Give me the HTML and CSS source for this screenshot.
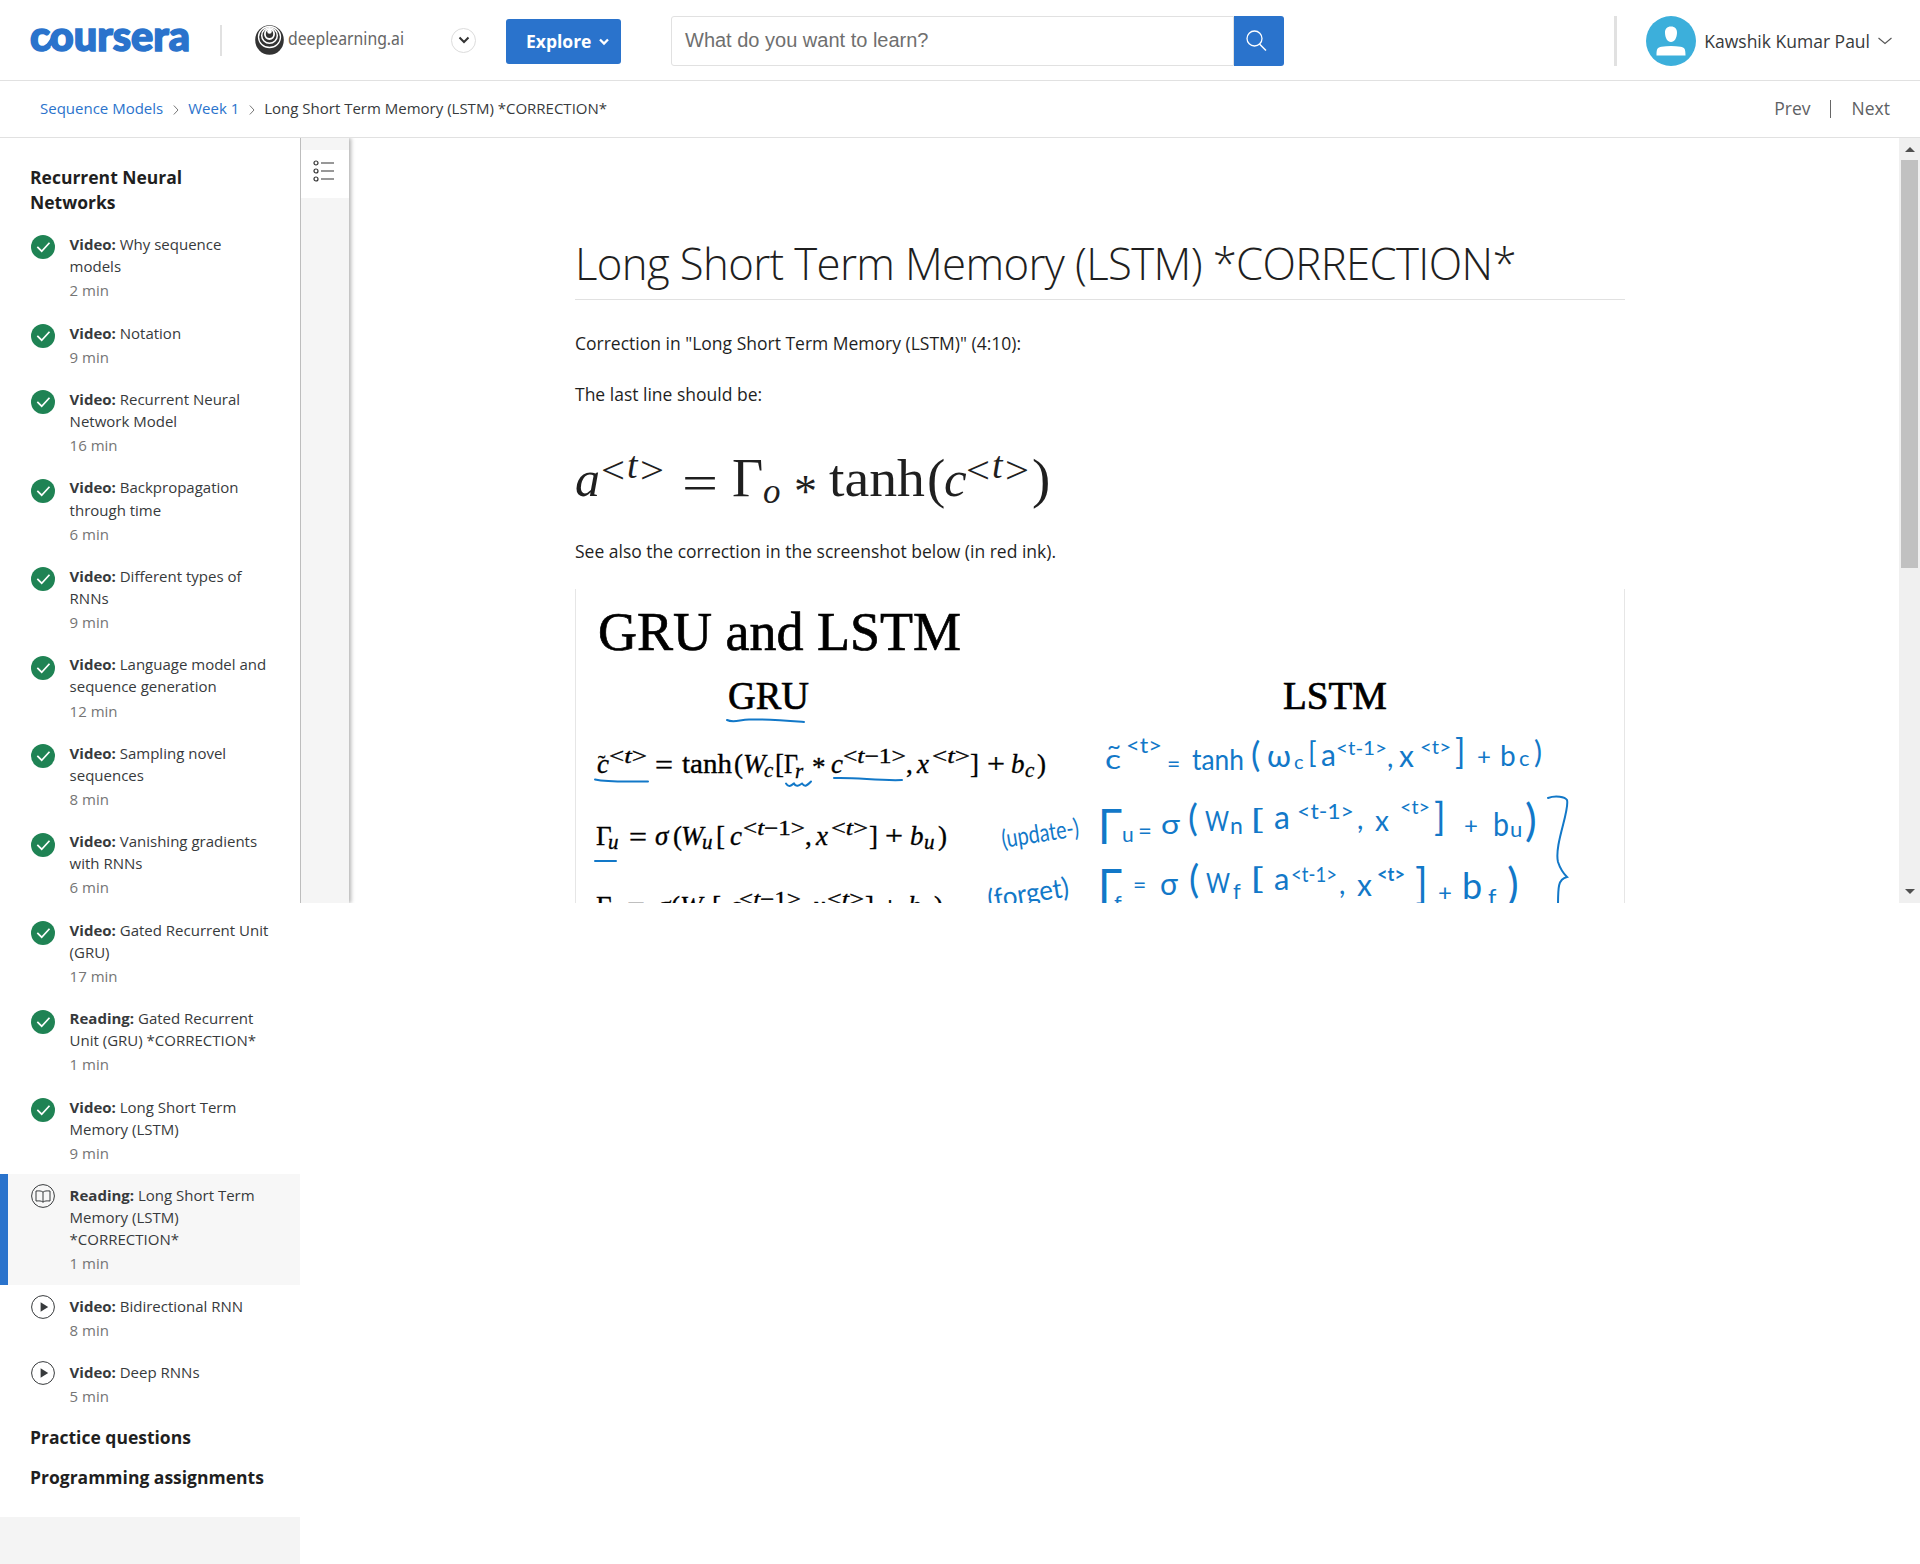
FILE: index.html
```html
<!DOCTYPE html>
<html lang="en">
<head>
<meta charset="utf-8">
<title>Long Short Term Memory (LSTM) *CORRECTION* | Coursera</title>
<link rel="stylesheet" href="styles.css">
</head>
<body>
<svg class="defs" width="0" height="0">
  <symbol id="done" viewBox="0 0 24 24"><circle cx="12" cy="12" r="12" fill="#1f8354"/><path d="M6.3 11.8l4.4 4.4 7.8-8.5" fill="none" stroke="#fff" stroke-width="1.7"/></symbol>
  <symbol id="play" viewBox="0 0 24 24"><circle cx="12" cy="12" r="11.4" fill="#fff" stroke="#373a3c" stroke-width="1"/><path d="M9.6 7.3v9.4l7.6-4.7z" fill="#373a3c"/></symbol>
  <symbol id="book" viewBox="0 0 24 24"><circle cx="12" cy="12" r="11.4" fill="none" stroke="#373a3c" stroke-width="1"/><path d="M12 8.2C10.500 6.700 8 6.800 5 7v10c3-.2 5.500-.3 7 1.200 1.500-1.500 4-1.400 7-1.200V7c-3-.2-5.500-.3-7 1.200zM12 8.200v10" fill="none" stroke="#373a3c" stroke-width="1"/></symbol>
</svg>

<header class="topbar">
  <svg class="logo" width="160" height="24" viewBox="0 0 160 24">
    <text class="logo-text" x="0" y="23" textLength="160" lengthAdjust="spacingAndGlyphs">coursera</text>
    <path d="M14 21C21 18.500 23 7 30 4" fill="none" stroke="#2a73cc" stroke-width="5"/>
  </svg>
  <span class="logo-divider"></span>
  <svg class="partner" width="150" height="30" viewBox="0 0 150 30">
    <ellipse cx="14.500" cy="15" rx="14.300" ry="14.800" fill="#333"/>
    <g fill="none" stroke="#fff">
      <ellipse cx="14.500" cy="12" rx="11" ry="10.500" stroke-width="1.300"/>
      <ellipse cx="14.500" cy="10.500" rx="7.800" ry="7.800" stroke-width="1.500"/>
      <ellipse cx="14.500" cy="9" rx="4.600" ry="5" stroke-width="1.800"/>
    </g>
    <circle cx="14.500" cy="6.500" r="2.300" fill="#fff"/>
    <text class="partner-text" x="33" y="19.500" textLength="116" lengthAdjust="spacingAndGlyphs">deeplearning.ai</text>
  </svg>
  <span class="switcher"><svg width="12" height="8" viewBox="0 0 12 8"><path d="M1.500 1.500L6 6l4.500-4.500" fill="none" stroke="#333" stroke-width="2"/></svg></span>
  <button class="explore">Explore <svg width="10" height="8" viewBox="0 0 10 8"><path d="M1 1.500l4 4 4-4" fill="none" stroke="#fff" stroke-width="2.300"/></svg></button>
  <div class="search">
    <div class="search-field">What do you want to learn?</div>
    <div class="search-button"><svg width="21" height="22" viewBox="0 0 21 22"><circle cx="8.500" cy="8.500" r="7.500" fill="none" stroke="#fff" stroke-width="1.300"/><path d="M13.500 14l6.500 6.500" stroke="#fff" stroke-width="1.500"/></svg></div>
  </div>
  <div class="account">
    <svg class="avatar" width="50" height="50" viewBox="0 0 50 50"><circle cx="25" cy="25" r="25" fill="#3cafdb"/><path d="M25 10.500c4 0 6.200 2.500 6 6.500-.2 5-2.500 9-6 9s-5.800-4-6-9c-.2-4 2-6.500 6-6.500zM10.500 39.500c0-7 1-8 5-8.700 6-1.200 13-1.200 19 0 4 .7 5 1.700 5 8.700z" fill="#fff"/></svg>
    <span class="user">Kawshik Kumar Paul</span>
    <svg width="14" height="8" viewBox="0 0 14 8"><path d="M.5 1L7 6.500 13.500 1" fill="none" stroke="#555" stroke-width="1.100"/></svg>
  </div>
</header>

<nav class="crumbs">
  <a>Sequence Models</a>
  <svg width="6" height="10" viewBox="0 0 6 10"><path d="M.8.5L5 5 .8 9.500" fill="none" stroke="#777"/></svg>
  <a>Week 1</a>
  <svg width="6" height="10" viewBox="0 0 6 10"><path d="M.8.5L5 5 .8 9.500" fill="none" stroke="#777"/></svg>
  <span>Long Short Term Memory (LSTM) *CORRECTION*</span>
  <div class="pager"><span>Prev</span><i></i><span>Next</span></div>
</nav>

<div class="layout">
  <aside class="sidebar">
    <h2 class="first">Recurrent Neural<br>Networks</h2>
    <ul>
      <li><svg><use href="#done"/></svg><div><b>Video:</b> Why sequence<br>models<small>2 min</small></div></li>
      <li><svg><use href="#done"/></svg><div><b>Video:</b> Notation<small>9 min</small></div></li>
      <li><svg><use href="#done"/></svg><div><b>Video:</b> Recurrent Neural<br>Network Model<small>16 min</small></div></li>
      <li><svg><use href="#done"/></svg><div><b>Video:</b> Backpropagation<br>through time<small>6 min</small></div></li>
      <li><svg><use href="#done"/></svg><div><b>Video:</b> Different types of<br>RNNs<small>9 min</small></div></li>
      <li><svg><use href="#done"/></svg><div><b>Video:</b> Language model and<br>sequence generation<small>12 min</small></div></li>
      <li><svg><use href="#done"/></svg><div><b>Video:</b> Sampling novel<br>sequences<small>8 min</small></div></li>
      <li><svg><use href="#done"/></svg><div><b>Video:</b> Vanishing gradients<br>with RNNs<small>6 min</small></div></li>
      <li><svg><use href="#done"/></svg><div><b>Video:</b> Gated Recurrent Unit<br>(GRU)<small>17 min</small></div></li>
      <li><svg><use href="#done"/></svg><div><b>Reading:</b> Gated Recurrent<br>Unit (GRU) *CORRECTION*<small>1 min</small></div></li>
      <li><svg><use href="#done"/></svg><div><b>Video:</b> Long Short Term<br>Memory (LSTM)<small>9 min</small></div></li>
      <li class="todo active"><svg><use href="#book"/></svg><div><b>Reading:</b> Long Short Term<br>Memory (LSTM)<br>*CORRECTION*<small>1 min</small></div></li>
      <li class="todo"><svg><use href="#play"/></svg><div><b>Video:</b> Bidirectional RNN<small>8 min</small></div></li>
      <li class="todo"><svg><use href="#play"/></svg><div><b>Video:</b> Deep RNNs<small>5 min</small></div></li>
    </ul>
    <h2>Practice questions</h2>
    <h2>Programming assignments</h2>
    <div class="sidebar-foot"></div>
  </aside>

  <div class="rail">
    <div class="rail-button"><svg width="22" height="22" viewBox="0 0 22 22" fill="none" stroke="#333" stroke-width="1.200"><circle cx="3" cy="3" r="2"/><circle cx="3" cy="11" r="2"/><circle cx="3" cy="19" r="2"/><path d="M8 3h13M8 11h13M8 19h13"/></svg></div>
  </div>

  <main class="pane">
    <article>
      <h1>Long Short Term Memory (LSTM) *CORRECTION*</h1>
      <p>Correction in "Long Short Term Memory (LSTM)" (4:10):</p>
      <p>The last line should be:</p>
      <svg class="formula" width="1050" height="80" viewBox="575 440 1050 80">
        <g class="it" font-size="51">
          <text x="575" y="496" textLength="25" lengthAdjust="spacingAndGlyphs">a</text><text x="944" y="496">c</text>
          <text x="763" y="503" font-size="35">o</text>
          <text x="627" y="478" font-size="38">t</text><text x="992" y="478" font-size="38">t</text>
        </g>
        <g font-size="38">
          <text x="601" y="483" textLength="24" lengthAdjust="spacingAndGlyphs">&lt;</text><text x="640" y="483" textLength="24" lengthAdjust="spacingAndGlyphs">&gt;</text>
          <text x="966" y="483" textLength="24" lengthAdjust="spacingAndGlyphs">&lt;</text><text x="1005" y="483" textLength="24" lengthAdjust="spacingAndGlyphs">&gt;</text>
        </g>
        <g font-size="51">
          <text x="682" y="500" textLength="36" lengthAdjust="spacingAndGlyphs">=</text>
          <text x="732" y="496" font-size="54">Γ</text>
          <text x="794" y="507" font-size="46">*</text>
          <text x="829" y="496" font-size="53" textLength="96" lengthAdjust="spacingAndGlyphs">tanh</text>
          <text x="927" y="497" font-size="55">(</text><text x="1032" y="497" font-size="55">)</text>
        </g>
      </svg>
      <p class="after-formula">See also the correction in the screenshot below (in red ink).</p>
      <div class="slide">
      <svg width="1050" height="400" viewBox="575 589 1050 400">
        <g class="print">
          <text x="598" y="650" font-size="54" textLength="363" lengthAdjust="spacingAndGlyphs">GRU and LSTM</text>
          <text x="728" y="708.500" font-size="39" textLength="81" lengthAdjust="spacingAndGlyphs">GRU</text>
          <text x="1283" y="708.500" font-size="39" textLength="104" lengthAdjust="spacingAndGlyphs">LSTM</text>
        </g>
        <g class="eq">
          <text class="it" x="597" y="772.500">c</text><text x="598" y="770" font-size="22">˜</text>
          <text class="sup" x="609" y="763" textLength="38" lengthAdjust="spacingAndGlyphs">&lt;<tspan class="it">t</tspan>&gt;</text>
          <text x="655" y="774" textLength="18" lengthAdjust="spacingAndGlyphs">=</text>
          <text x="682" y="772.500" textLength="50" lengthAdjust="spacingAndGlyphs">tanh</text>
          <text x="734" y="772.500">(</text><text class="it" x="743" y="772.500">W</text><text class="it sub" x="764" y="777">c</text>
          <text x="775" y="772.500">[</text><text x="784" y="772.500" textLength="14" lengthAdjust="spacingAndGlyphs">Γ</text><text class="it sub" x="795" y="778">r</text>
          <text x="812" y="776">*</text><text class="it" x="831" y="772.500">c</text>
          <text class="sup" x="843" y="763" textLength="63" lengthAdjust="spacingAndGlyphs">&lt;<tspan class="it">t</tspan>−1&gt;</text>
          <text x="906" y="772.500">,</text><text class="it" x="917" y="772.500">x</text>
          <text class="sup" x="932" y="763" textLength="38" lengthAdjust="spacingAndGlyphs">&lt;<tspan class="it">t</tspan>&gt;</text>
          <text x="970" y="772.500">]</text><text x="987" y="773" textLength="18" lengthAdjust="spacingAndGlyphs">+</text>
          <text class="it" x="1011" y="772.500">b</text><text class="it sub" x="1025" y="777">c</text><text x="1037" y="772.500">)</text>
        </g>
        <g class="eq">
          <text x="596" y="844.500">Γ</text><text class="it sub" x="608" y="849">u</text>
          <text x="629" y="846" textLength="18" lengthAdjust="spacingAndGlyphs">=</text>
          <text class="it" x="655" y="844.500">σ</text><text x="673" y="844.500">(</text><text class="it" x="681" y="844.500">W</text><text class="it sub" x="702" y="849">u</text>
          <text x="716" y="844.500">[</text><text class="it" x="730" y="844.500">c</text>
          <text class="sup" x="743" y="835" textLength="62" lengthAdjust="spacingAndGlyphs">&lt;<tspan class="it">t</tspan>−1&gt;</text>
          <text x="805" y="844.500">,</text><text class="it" x="816" y="844.500">x</text>
          <text class="sup" x="831" y="835" textLength="37" lengthAdjust="spacingAndGlyphs">&lt;<tspan class="it">t</tspan>&gt;</text>
          <text x="869" y="844.500">]</text><text x="885" y="845" textLength="18" lengthAdjust="spacingAndGlyphs">+</text>
          <text class="it" x="910" y="844.500">b</text><text class="it sub" x="924" y="849">u</text><text x="938" y="844.500">)</text>
        </g>
        <g class="eq">
          <text x="596" y="915">Γ</text><text class="it sub" x="608" y="920">r</text>
          <text x="627" y="916" textLength="18" lengthAdjust="spacingAndGlyphs">=</text>
          <text class="it" x="657" y="915">σ</text><text x="671" y="915">(</text><text class="it" x="680" y="915">W</text><text class="it sub" x="701" y="920">r</text>
          <text x="712" y="915">[</text><text class="it" x="729" y="915">c</text>
          <text class="sup" x="739" y="906" textLength="62" lengthAdjust="spacingAndGlyphs">&lt;<tspan class="it">t</tspan>−1&gt;</text>
          <text x="802" y="915">,</text><text class="it" x="813" y="915">x</text>
          <text class="sup" x="827" y="906" textLength="37" lengthAdjust="spacingAndGlyphs">&lt;<tspan class="it">t</tspan>&gt;</text>
          <text x="865" y="915">]</text><text x="881" y="916" textLength="18" lengthAdjust="spacingAndGlyphs">+</text>
          <text class="it" x="908" y="915">b</text><text x="934" y="915">)</text>
        </g>
        <g class="ink-lines">
          <path d="M727 720c6 3 12 0 22-.5 18-.5 36 1 55 2.500"/>
          <path d="M595 779.500c14 3 30 2 53 2"/>
          <path d="M786 783.500c3 5 6 1 8 0 2 4 5 2 8 0 3 4 5 2 9-2"/>
          <path d="M834 778c22-1 44 3 68 2"/>
          <path d="M595 861h21"/>
          <path d="M1548 798c8-3 17-1 19 2 3 10-13 45-9 62 2 6 5 11 9 15-9 2-9 10-9 30"/>
        </g>
        <g class="ink">
          <text x="1107" y="754" font-size="24">~</text><text x="1105" y="769" font-size="27" textLength="16" lengthAdjust="spacingAndGlyphs">c</text>
          <text x="1126" y="753" font-size="22" textLength="36" lengthAdjust="spacingAndGlyphs">&lt;t&gt;</text>
          <text x="1167" y="772" font-size="23">=</text>
          <text x="1192" y="770" font-size="29" textLength="52" lengthAdjust="spacingAndGlyphs">tanh</text>
          <text x="1251" y="767" font-size="35">(</text><text x="1267" y="767" font-size="30" textLength="24" lengthAdjust="spacingAndGlyphs">ω</text><text x="1294" y="769" font-size="20">c</text>
          <text x="1308" y="763" font-size="28">[</text><text x="1321" y="766" font-size="30">a</text>
          <text x="1336" y="755" font-size="20" textLength="51" lengthAdjust="spacingAndGlyphs">&lt;t-1&gt;</text>
          <text x="1387" y="767" font-size="28">,</text><text x="1399" y="767" font-size="30">x</text>
          <text x="1420" y="754" font-size="20" textLength="31" lengthAdjust="spacingAndGlyphs">&lt;t&gt;</text>
          <text x="1455" y="764" font-size="34">]</text><text x="1477" y="765" font-size="24">+</text>
          <text x="1500" y="766" font-size="28">b</text><text x="1519" y="766" font-size="22">c</text><text x="1534" y="763" font-size="30">)</text>

          <text transform="translate(1003 848) rotate(-9)" x="0" y="0" font-size="25" textLength="78" lengthAdjust="spacingAndGlyphs">(update-)</text>
          <text x="1098" y="844" font-size="48" textLength="24" lengthAdjust="spacingAndGlyphs">Γ</text><text x="1122" y="842" font-size="21">u</text>
          <text x="1138" y="839" font-size="24">=</text><text x="1161" y="834" font-size="26" textLength="19" lengthAdjust="spacingAndGlyphs">σ</text>
          <text x="1188" y="831" font-size="37">(</text><text x="1205" y="831" font-size="27" textLength="24" lengthAdjust="spacingAndGlyphs">W</text><text x="1230" y="834" font-size="23">n</text>
          <text x="1250" y="829" font-size="27" textLength="14" lengthAdjust="spacingAndGlyphs">[</text><text x="1274" y="829" font-size="32">a</text>
          <text x="1297" y="819" font-size="22" textLength="57" lengthAdjust="spacingAndGlyphs">&lt;t-1&gt;</text>
          <text x="1357" y="829" font-size="28">,</text><text x="1375" y="831" font-size="28">x</text>
          <text x="1400" y="814" font-size="20" textLength="30" lengthAdjust="spacingAndGlyphs">&lt;t&gt;</text>
          <text x="1434" y="830" font-size="38">]</text><text x="1464" y="834" font-size="24">+</text>
          <text x="1493" y="836" font-size="32" textLength="16" lengthAdjust="spacingAndGlyphs">b</text><text x="1510" y="837" font-size="22">u</text><text x="1525" y="836" font-size="44">)</text>

          <text transform="translate(989 909) rotate(-9)" x="0" y="0" font-size="27" textLength="82" lengthAdjust="spacingAndGlyphs">(forget)</text>
          <text x="1098" y="905" font-size="50" textLength="24" lengthAdjust="spacingAndGlyphs">Γ</text><text x="1114" y="911" font-size="22">f</text>
          <text x="1133" y="893" font-size="23">=</text><text x="1160" y="895" font-size="30">σ</text>
          <text x="1189" y="893" font-size="38">(</text><text x="1206" y="893" font-size="27" textLength="24" lengthAdjust="spacingAndGlyphs">W</text><text x="1233" y="899" font-size="22">f</text>
          <text x="1250" y="889" font-size="28" textLength="14" lengthAdjust="spacingAndGlyphs">[</text><text x="1274" y="890" font-size="31">a</text>
          <text x="1291" y="882" font-size="21" textLength="46" lengthAdjust="spacingAndGlyphs">&lt;t-1&gt;</text>
          <text x="1339" y="894" font-size="28">,</text><text x="1357" y="896" font-size="30">x</text>
          <text x="1377" y="881" font-size="19" font-weight="700" textLength="28" lengthAdjust="spacingAndGlyphs">&lt;t&gt;</text>
          <text x="1415" y="899" font-size="42">]</text><text x="1438" y="901" font-size="24">+</text>
          <text x="1462" y="899" font-size="36">b</text><text x="1488" y="906" font-size="24">f</text><text x="1507" y="900" font-size="44">)</text>
        </g>
      </svg>
      </div>
    </article>
  </main>
  <div class="scrollbar"><i class="up"></i><span></span><i class="down"></i></div>
</div>
</body>
</html>
```
FILE: styles.css
```css
* { box-sizing: border-box; }
body {
  margin: 0;
  height: 1564px;
  overflow: hidden;
  background: #fff;
  color: #1f1f1f;
  font: 17.5px/25px "Open Sans", sans-serif;
}
svg { display: block; flex: none; }
.defs { display: none; }

.topbar {
  display: flex;
  align-items: center;
  height: 81px;
  padding: 0 28px 0 30px;
  border-bottom: 1px solid #e1e1e1;
}
.logo, .partner { overflow: visible; }
.logo-text {
  font: 900 42px "Lato", sans-serif;
  fill: #2a73cc;
  stroke: #2a73cc;
  stroke-width: 1.6px;
}
.logo-divider { width: 2px; height: 31px; margin-left: 30px; background: #e1e1e1; }
.partner { margin-left: 33px; }
.partner-text { font: 18.5px "Noto Sans", sans-serif; fill: #666; }
.switcher {
  display: flex;
  align-items: center;
  justify-content: center;
  width: 25px;
  height: 25px;
  margin-left: 46px;
  border: 1px solid #dcdcdc;
  border-radius: 50%;
}
.explore {
  display: flex;
  align-items: center;
  gap: 8px;
  width: 115px;
  height: 45px;
  margin: 3px 0 0 30px;
  padding: 0 0 1px 20px;
  border: 0;
  border-radius: 3px;
  background: #2a73cc;
  color: #fff;
  font: 700 17.5px "Open Sans", sans-serif;
}
.explore svg { margin-top: 2px; }
.search { display: flex; width: 613px; height: 50px; margin: 2px 0 0 50px; }
.search-field {
  flex: 1;
  padding: 0 13px;
  border: 1px solid #e1e1e1;
  border-radius: 3px 0 0 3px;
  color: #6f6f6f;
  font: 20px/46px "Liberation Sans", sans-serif;
}
.search-button {
  display: flex;
  align-items: center;
  width: 50px;
  padding-left: 12px;
  border-radius: 0 3px 3px 0;
  background: #2a73cc;
}
.account {
  display: flex;
  align-items: center;
  height: 50px;
  margin: 2px 0 0 auto;
  padding-left: 29px;
  border-left: 3px solid #e1e1e1;
}
.user { margin: 0 8px; white-space: nowrap; color: #373a3c; }

.crumbs {
  display: flex;
  align-items: center;
  height: 57px;
  padding: 0 30px 1px 40px;
  border-bottom: 1px solid #e1e1e1;
  color: #373a3c;
  font-size: 15px;
}
.crumbs a { color: #2a73cc; }
.crumbs > svg { margin: 3px 9px 0 10px; }
.pager {
  display: flex;
  align-items: center;
  margin-left: auto;
  color: #5e6164;
  font-size: 17.5px;
}
.pager i { width: 1px; height: 18px; margin: 1px 21px 0 19px; background: #666; }

.layout { display: flex; align-items: flex-start; }
.sidebar {
  display: flex;
  flex-direction: column;
  flex: none;
  width: 300px;
  height: 1426px;
}
.sidebar h2 {
  margin: 0;
  padding-left: 30px;
  font-size: 17.5px;
  line-height: 25px;
  height: 40px;
}
.sidebar h2.first { height: 85px; padding-top: 27px; }
.sidebar ul { margin: 0 0 8px; padding: 0; list-style: none; }
.sidebar li {
  display: flex;
  gap: 15px;
  padding: 10.1px 0 10.1px 30px;
  color: #373a3c;
  font-size: 15px;
  line-height: 22.1px;
}
.sidebar li svg { width: 24px; height: 24px; margin: 2.4px 0 0 .6px; }
.sidebar li.todo svg { margin-top: .3px; }
.sidebar li.active {
  padding-left: 22px;
  border-left: 8px solid #2a73cc;
  background: #f7f7f7;
}
.sidebar small { display: block; margin-top: 2px; color: #757575; font-size: 15px; }
.sidebar-foot { height: 47px; margin-top: auto; background: #f4f4f4; }

.rail {
  flex: none;
  width: 49px;
  height: 765px;
  padding-top: 12px;
  border-left: 1px solid #bdbdbd;
  background: #f5f5f5;
  box-shadow: 2px 0 4px rgba(0, 0, 0, .3);
  clip-path: inset(0 -8px 0 0);
}
.rail-button { height: 48px; padding: 10px 0 0 12px; background: #fff; }
.pane { flex: 1; height: 765px; overflow: hidden; }
article { width: 1050px; margin-left: 226px; padding-top: 97px; }
h1 {
  height: 65px;
  margin: 0 0 31px;
  border-bottom: 1px solid #e1e1e1;
  font-size: 43.75px;
  font-weight: 300;
  line-height: 56px;
  letter-spacing: -.65px;
  white-space: nowrap;
}
article p { margin: 0 0 26px; }
.formula { margin-top: 33px; fill: #1f1f1f; font-family: "Liberation Serif", serif; }
.it { font-style: italic; }
article .after-formula { margin: 19px 0 25px; }
.slide { border-left: 1px solid #e6e6e6; border-right: 1px solid #e6e6e6; }
.slide svg { margin: 0 -1px; font-family: "Liberation Serif", serif; }
.print { stroke: #000; stroke-width: .7px; }
.eq { font-size: 27px; stroke: #000; stroke-width: .35px; }
.sup { font-size: 21px; }
.sub { font-size: 21px; }
.ink-lines { fill: none; stroke: #1278c8; stroke-width: 2; stroke-linecap: round; }
.ink { fill: #1278c8; font-family: "Lato", "Open Sans", sans-serif; }

.scrollbar {
  display: flex;
  flex-direction: column;
  align-items: center;
  flex: none;
  width: 21px;
  height: 765px;
  padding: 9px 0;
  background: #f0f0f0;
}
.scrollbar span { width: 17px; height: 408px; margin: 8px 0 auto; background: #c1c1c1; }
.scrollbar i { border: 5px solid transparent; }
.scrollbar .up { border-top: 0; border-bottom-color: #505050; }
.scrollbar .down { border-bottom: 0; border-top-color: #505050; }
```
